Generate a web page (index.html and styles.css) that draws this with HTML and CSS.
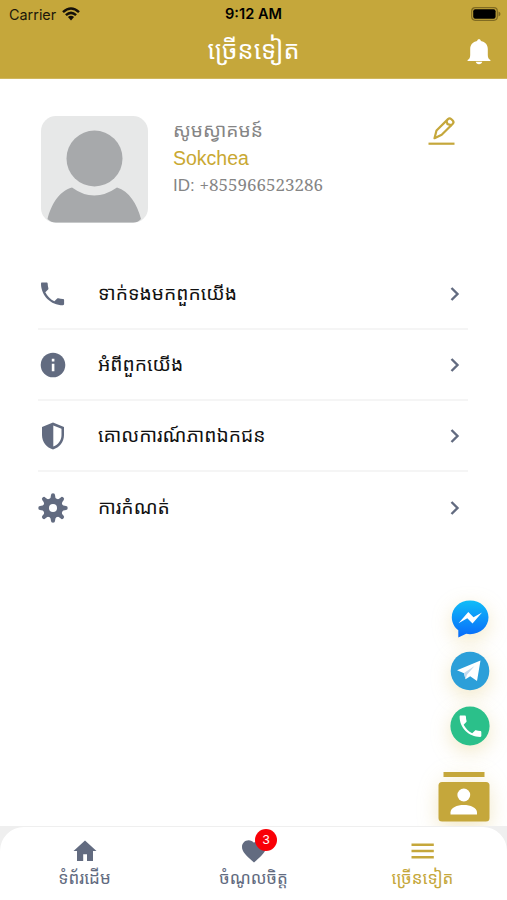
FILE: index.html
```html
<!DOCTYPE html>
<html lang="km">
<head>
<meta charset="utf-8">
<title>ច្រើនទៀត</title>
<link rel="stylesheet" href="styles.css">
</head>
<body>
<div class="app">
  <header class="header">
    <div class="status">
      <div class="carrier"><span>Carrier</span>
        <svg width="18" height="14" viewBox="0 0 18 14" fill="none" stroke="#15110a" stroke-width="2.500"><path d="M1 5.200Q9-2.200 17 5.200M3.900 8.200Q9 3.500 14.100 8.200"/><path d="M5.900 10.100Q9 7.500 12.100 10.100L9 13.400Z" fill="#15110a" stroke="none"/></svg>
      </div>
      <span class="clock">9:12 AM</span>
      <svg class="battery" width="30" height="14" viewBox="0 0 30 14"><rect x=".7" y=".7" width="25.600" height="12.600" rx="3.500" fill="none" stroke="#806b22" stroke-width="1.200"/><rect x="2.200" y="2.300" width="22.400" height="9.400" rx="2" fill="#000"/><path d="M27.500 4.600Q29.500 5.400 29.500 7T27.500 9.400Z" fill="#806b22"/></svg>
    </div>
    <div class="titlebar">
      <h1>ច្រើនទៀត</h1>
      <svg class="bell" width="24" height="26" viewBox="0 0 24 26" fill="#fff"><path d="M12 .3c1.100 0 1.700.7 1.900 1.600 4.600.9 6.900 4 6.900 8.100v6c0 2.800.9 4.200 2.600 5v1H.6v-1c1.700-.8 2.600-2.200 2.600-5v-6c0-4.100 2.300-7.200 6.900-8.100.2-.9.800-1.600 1.900-1.600zM8.700 22.800h6.600c-.4 1.500-1.600 2.500-3.300 2.500s-2.900-1-3.300-2.500z"/></svg>
    </div>
  </header>

  <section class="profile">
    <svg class="avatar" width="107" height="107" viewBox="0 0 107 107"><rect width="107" height="107" rx="15" fill="#e7e8e8"/><circle cx="53.500" cy="42.500" r="28" fill="#a7a9ab"/><path d="M31 71.500Q53 87.500 76 71.500C88 75 96 88 100 103Q97 106.500 92 106.500H15Q10 106.500 6.500 103C10 89 18 75 31 71.500Z" fill="#a7a9ab"/></svg>
    <div class="who">
      <div class="welcome">សូមស្វាគមន៍</div>
      <div class="name">Sokchea</div>
      <div class="uid">ID: <span>+855966523286</span></div>
    </div>
    <svg class="edit" width="28" height="30" viewBox="0 0 28 30" fill="none" stroke="#c5a73b" stroke-width="2.200"><path d="M.5 27.700h26" stroke-width="2.200"/><path d="M6.500 22.200l2-7.700L20 3.100q1.600-1.500 3.400.1l1.300 1.300q1.600 1.700.1 3.200L13.700 18.700Z" stroke-linejoin="round"/><path d="M18.500 5l1 3.100 4.300 1.300"/></svg>
  </section>

  <nav class="menu">
    <a class="row">
      <svg class="ico" viewBox="0 0 30 30"><path d="M3.500 3.500h5c.7 0 1.200.5 1.200 1.200 0 1.600.3 3.100.7 4.500.1.400 0 .9-.3 1.200L7.300 13.200c2 3.900 5.200 7.100 9.100 9.100l2.800-2.800c.3-.3.800-.4 1.200-.3 1.400.5 2.900.7 4.500.7.700 0 1.200.5 1.200 1.200V25c0 .7-.5 1.200-1.200 1.200C12.700 26.200 3 16.500 3 4.700 3 4 3.500 3.500 3.500 3.500z"/></svg>
      <span class="label">ទាក់ទងមកពួកយើង</span>
      <svg class="chev" viewBox="0 0 12 16"><path d="M2.500 2l6 6-6 6"/></svg>
    </a>
    <a class="row">
      <svg class="ico" viewBox="0 0 30 30"><circle cx="15" cy="15" r="12.300"/><path d="M13.800 8.800h2.600v2.600h-2.600zM13.800 13.800h2.600v7.400h-2.600z" fill="#fff"/></svg>
      <span class="label">អំពីពួកយើង</span>
      <svg class="chev" viewBox="0 0 12 16"><path d="M2.500 2l6 6-6 6"/></svg>
    </a>
    <a class="row">
      <svg class="ico" viewBox="0 0 30 30"><path fill-rule="evenodd" d="M15 1.500L26 6v8c0 7-4.700 12.500-11 14.500C8.700 26.500 4 21 4 14V6zM15.300 4.400v21.200c5-1.800 8.200-6.400 8.200-11.600V7.700z"/></svg>
      <span class="label">គោលការណ៍ភាពឯកជន</span>
      <svg class="chev" viewBox="0 0 12 16"><path d="M2.500 2l6 6-6 6"/></svg>
    </a>
    <a class="row">
      <svg class="ico" viewBox="0 0 30 30"><defs><path id="tooth" d="M11.300 6.500Q13 5 13 2Q13 .3 15 .3T17 2Q17 5 18.700 6.500Z"/></defs><circle cx="15" cy="15" r="10"/><use href="#tooth"/><use href="#tooth" transform="rotate(45 15 15)"/><use href="#tooth" transform="rotate(90 15 15)"/><use href="#tooth" transform="rotate(135 15 15)"/><use href="#tooth" transform="rotate(180 15 15)"/><use href="#tooth" transform="rotate(225 15 15)"/><use href="#tooth" transform="rotate(270 15 15)"/><use href="#tooth" transform="rotate(315 15 15)"/><circle cx="15" cy="15" r="4" fill="#fff"/></svg>
      <span class="label">ការកំណត់</span>
      <svg class="chev" viewBox="0 0 12 16"><path d="M2.500 2l6 6-6 6"/></svg>
    </a>
  </nav>

  <aside class="contacts">
    <svg class="messenger" width="38" height="38" viewBox="0 0 38 38"><defs><linearGradient id="blue" x2="0" y2="1"><stop stop-color="#11bdf8"/><stop offset="1" stop-color="#0869fa"/></linearGradient></defs><path d="M19 .5C29.500.5 37.500 8 37.500 17.300S29.500 34.200 19 34.200q-2 0-3.800-.4L7.300 37.500v-7.200C3.200 27.200.8 22.500.8 17.300.8 8 8.500.5 19 .5Z" fill="url(#blue)"/><path d="M7.500 23.300l9.800-11.300 5.200 5.300 8.500-4.700-9.500 10.900-5.200-5.200z" fill="#fff"/></svg>
    <svg class="telegram" width="40" height="40" viewBox="0 0 40 40"><circle cx="20" cy="20" r="19.300" fill="#2c9fd9"/><path d="M7 19.300L30.500 9.500 27 30 20.200 25.200 15.500 28.300 14 22.300Z" fill="#fff"/><path d="M14 22L24.500 15 17 23.800 15.500 28.300Z" fill="#c2d9ee"/></svg>
    <svg class="call" width="40" height="40" viewBox="0 0 40 40"><circle cx="20" cy="20" r="19.600" fill="#2bc08a"/><path transform="translate(6.800 6.300) scale(.94)" fill="#fff" d="M3.500 3.500h5c.7 0 1.200.5 1.200 1.200 0 1.600.3 3.100.7 4.500.1.400 0 .9-.3 1.200L7.300 13.200c2 3.900 5.200 7.100 9.100 9.100l2.800-2.800c.3-.3.800-.4 1.200-.3 1.400.5 2.900.7 4.500.7.700 0 1.200.5 1.200 1.200V25c0 .7-.5 1.200-1.200 1.200C12.700 26.200 3 16.500 3 4.700 3 4 3.500 3.500 3.500 3.500z"/></svg>
    <svg class="card" width="52" height="50" viewBox="0 0 52 50"><path d="M5.500 0h41v5h-41z" fill="#c5a73b"/><rect x=".5" y="10" width="51" height="39.500" rx="3.500" fill="#c5a73b"/><circle cx="25.800" cy="23" r="6.400" fill="#fff"/><path d="M12.500 42.500v-2c0-10 26.500-10 26.500 0v2z" fill="#fff"/></svg>
  </aside>

  <footer class="tabs">
    <a class="tab">
      <svg width="28" height="28" viewBox="0 0 28 28"><path d="M14 4.500L2.500 15H6v10h6.200v-6.800h3.800V25h6V15h3.500z"/></svg>
      <span>ទំព័រដើម</span>
    </a>
    <a class="tab">
      <svg width="28" height="28" viewBox="0 0 28 28"><path d="M14 26.500L12 24.700C6 19.200 2 15.700 2 11 2 7.200 4.900 4.300 8.600 4.300c2.100 0 4.100 1 5.400 2.500 1.300-1.500 3.300-2.500 5.400-2.500C23.100 4.300 26 7.200 26 11c0 4.700-4 8.200-10 13.700z"/></svg>
      <b class="badge">3</b>
      <span>ចំណូលចិត្ត</span>
    </a>
    <a class="tab active">
      <svg width="28" height="28" viewBox="0 0 28 28"><path d="M2.500 7.500h22.300V10H2.500zM2.500 13.800h22.300v2.500H2.500zM2.500 20h22.300v2.500H2.500z"/></svg>
      <span>ច្រើនទៀត</span>
    </a>
  </footer>
</div>
</body>
</html>
```
FILE: styles.css
```css
* { box-sizing: border-box; }
body { margin: 0; font-family: "Liberation Sans", "Noto Sans Khmer", "Khmer OS", sans-serif; background: #fff; }
.app { position: relative; width: 507px; height: 900px; display: flex; flex-direction: column; overflow: hidden; }
svg { display: block; flex: none; }
.header { height: 79px; background: #c5a73b; border-bottom: 1px solid #d0b75e; }
.status { height: 27px; display: grid; grid-template-columns: 1fr auto 1fr; align-items: center; padding: 0 6px; color: #1c170a; }
.carrier { display: flex; align-items: center; gap: 6px; padding-left: 3px; font: 14.4px/27px Inter, sans-serif; }
.carrier svg { margin-top: -1px; }
.clock { padding-top: 1px; font: 600 14.6px/27px Inter, sans-serif; color: #000; }
.battery { justify-self: end; margin-top: -1px; }
.titlebar { height: 48px; display: grid; grid-template-columns: 1fr auto 1fr; align-items: center; padding: 0 16px; }
h1 { grid-column: 2; margin: -2px 0 0; color: #fff; font-size: 25.3px; font-weight: 400; line-height: 48px; white-space: nowrap; }
.bell { justify-self: end; margin-top: 2px; }
.profile { display: flex; height: 180px; padding: 37px 51px 0 41px; }
.who { margin-left: 25px; flex: 1; color: #858585; white-space: nowrap; }
.welcome { height: 29px; font-size: 19.2px; line-height: 29px; }
.name { height: 27px; color: #c9a832; font-size: 19.5px; line-height: 27px; }
.uid { font-size: 17px; line-height: 25px; }
.uid span { font-family: "Noto Serif", "DejaVu Serif", "Liberation Serif", serif; }
.menu { display: flex; flex-direction: column; margin: 0 39px 0 38px; }
.row { height: 71px; display: flex; align-items: center; border-bottom: 2px solid #f5f5f5; padding-right: 7px; }
.row:last-child { border: 0; }
.ico { width: 30px; height: 30px; fill: #626b80; }
.label { flex: 1; margin-left: 30px; color: #111; font-size: 19.3px; line-height: 40px; white-space: nowrap; }
.chev { width: 12px; height: 16px; fill: none; stroke: #626b80; stroke-width: 2.4; }
.contacts { position: absolute; right: 16px; top: 600px; display: flex; flex-direction: column; align-items: flex-end; }
.contacts svg { filter: drop-shadow(0 6px 10px rgba(207, 172, 55, .28)); overflow: visible; }
.messenger { margin-right: 2px; }
.telegram { margin: 13px 1px 0 0; }
.call { margin: 15px 1px 0 0; }
.contacts .card { margin: 26px 1px 0 0; }
.tabs { position: relative; height: 73px; margin-top: auto; display: grid; grid-template-columns: repeat(3, 1fr); background: #fff; border-radius: 24px 24px 0 0; box-shadow: 0 0 0 30px #efefef; clip-path: inset(-1px 0 0 0); }
.tab { position: relative; display: flex; flex-direction: column; align-items: center; padding-top: 9px; color: #626b80; fill: currentColor; }
.tab span { font-size: 17px; line-height: 29px; white-space: nowrap; }
.active { color: #c5a73b; }
.badge { position: absolute; left: 86px; top: 2px; width: 22px; height: 22px; border-radius: 50%; background: #f90007; color: #fff; font-size: 13px; font-weight: 400; line-height: 22px; text-align: center; }
```
